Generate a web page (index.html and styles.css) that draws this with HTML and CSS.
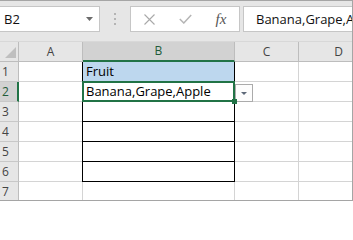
FILE: index.html
```html
<!DOCTYPE html>
<html>
<head>
<meta charset="utf-8">
<link rel="stylesheet" href="styles.css">
</head>
<body>
<div class="window">
  <div class="toolbar">
    <div class="namebox">
      <span class="nb-text">B2</span>
      <svg class="nb-arrow" width="7" height="4" viewBox="0 0 7 4"><polygon points="0,0 7,0 3.5,4" fill="#6b6b6b"/></svg>
    </div>
    <div class="dots"><i></i><i></i><i></i></div>
    <div class="fbtns">
      <div class="fbtn">
        <svg width="11" height="11" viewBox="0 0 11 11"><path d="M0.5 0.5 L10.5 10.5 M10.5 0.5 L0.5 10.5" stroke="#a9a9a9" stroke-width="1.1" fill="none"/></svg>
      </div>
      <div class="fbtn">
        <svg width="13" height="10" viewBox="0 0 13 10"><polyline points="0.8,5 4.8,9 12.2,1" stroke="#b5b5b5" stroke-width="1.5" fill="none"/></svg>
      </div>
      <div class="fbtn"><span class="fx">fx</span></div>
    </div>
    <div class="finput"><span class="ftext">Banana,Grape,Apple</span></div>
  </div>
  <div class="sheet">
    <div class="grid">
      <div class="cell ch corner"><svg width="18" height="19" viewBox="0 0 18 19"><polygon points="16,5 16,16 5,16" fill="#bfbfbf"/></svg></div>
      <div class="cell ch">A</div>
      <div class="cell ch sel">B</div>
      <div class="cell ch">C</div>
      <div class="cell ch">D</div>

      <div class="cell rh">1</div>
      <div class="cell"></div>
      <div class="cell tb hdr">Fruit</div>
      <div class="cell"></div>
      <div class="cell"></div>

      <div class="cell rh sel">2</div>
      <div class="cell"></div>
      <div class="cell tb">Banana,Grape,Apple</div>
      <div class="cell"></div>
      <div class="cell"></div>

      <div class="cell rh">3</div>
      <div class="cell"></div>
      <div class="cell tb"></div>
      <div class="cell"></div>
      <div class="cell"></div>

      <div class="cell rh">4</div>
      <div class="cell"></div>
      <div class="cell tb"></div>
      <div class="cell"></div>
      <div class="cell"></div>

      <div class="cell rh">5</div>
      <div class="cell"></div>
      <div class="cell tb"></div>
      <div class="cell"></div>
      <div class="cell"></div>

      <div class="cell rh">6</div>
      <div class="cell"></div>
      <div class="cell tb"></div>
      <div class="cell"></div>
      <div class="cell"></div>

      <div class="cell rh">7</div>
      <div class="cell"></div>
      <div class="cell"></div>
      <div class="cell"></div>
      <div class="cell"></div>
    </div>
    <div class="selection"></div>
    <div class="dd-btn"><svg width="6" height="3" viewBox="0 0 6 3"><polygon points="0,0 6,0 3,3" fill="#5d6878"/></svg></div>
    <div class="handle"></div>
  </div>
</div>
</body>
</html>
```
FILE: styles.css
```css
html, body {
  margin: 0;
  padding: 0;
  background: #ffffff;
}

.window {
  width: 352px;
  height: 199px;
  border-top: 1px solid #a5a5a5;
  border-right: 1px solid #a5a5a5;
  border-bottom: 1px solid #a5a5a5;
  overflow: hidden;
  background: #e6e6e6;
  font-family: "Open Sans", "Noto Sans", sans-serif;
  display: flex;
  flex-direction: column;
}

.toolbar {
  flex: 0 0 41px;
  height: 41px;
  box-sizing: border-box;
  padding-top: 5px;
  display: flex;
  align-items: flex-start;
  border-bottom: 1px solid #d8d8d8;
}

.namebox {
  flex: 0 0 100px;
  width: 100px;
  height: 26px;
  box-sizing: border-box;
  background: #ffffff;
  border: 1px solid #c6c6c6;
  border-left: none;
  display: flex;
  align-items: center;
  justify-content: space-between;
  padding: 0 6px 0 4px;
  font-size: 13px;
  color: #111;
}

.nb-text {
  line-height: 24px;
}

.dots {
  flex: 0 0 30px;
  height: 26px;
  display: flex;
  flex-direction: column;
  align-items: center;
  justify-content: center;
  gap: 3px;
}

.dots i {
  display: block;
  width: 2px;
  height: 2px;
  background: #b4b4b4;
}

.fbtns {
  flex: 0 0 110px;
  height: 26px;
  box-sizing: border-box;
  background: #ffffff;
  border: 1px solid #c6c6c6;
  display: flex;
}

.fbtn {
  width: 36px;
  display: flex;
  align-items: center;
  justify-content: center;
}

.fx {
  font-family: "Liberation Serif", serif;
  font-style: italic;
  font-size: 15px;
  color: #555;
  line-height: 24px;
}

.finput {
  flex: 1 1 auto;
  min-width: 0;
  margin-left: 3px;
  height: 26px;
  box-sizing: border-box;
  background: #ffffff;
  border: 1px solid #c6c6c6;
  border-right: none;
  padding-left: 12px;
  font-size: 13px;
  line-height: 24px;
  white-space: nowrap;
  overflow: hidden;
  color: #111;
}

.sheet {
  position: relative;
  flex: 1 1 auto;
  min-height: 0;
  overflow: hidden;
  background: #ffffff;
}

.grid {
  display: grid;
  grid-template-columns: 19px 64px 152px 64px 80px;
  grid-template-rows: repeat(8, 20px);
}

.cell {
  box-sizing: border-box;
  height: 20px;
  border-right: 1px solid #d4d4d4;
  border-bottom: 1px solid #d4d4d4;
  font-size: 13px;
  line-height: 19px;
  padding-left: 3px;
  white-space: nowrap;
  overflow: hidden;
  color: #000;
  background: #ffffff;
}

.ch {
  background: #e6e6e6;
  border-right-color: #bdbdbd;
  border-bottom-color: #bdbdbd;
  text-align: center;
  font-size: 12px;
  color: #444;
  padding: 0;
}

.ch.sel {
  background: #d2d2d2;
  border-bottom: 2px solid #217346;
  color: #1f5c3a;
  line-height: 18px;
}

.corner svg {
  display: block;
}

.rh {
  background: #e6e6e6;
  border-right-color: #bdbdbd;
  border-bottom-color: #c8c8c8;
  font-size: 12px;
  color: #444;
  padding-left: 2px;
}

.rh.sel {
  background: #d2d2d2;
  border-right: 2px solid #217346;
  color: #1f5c3a;
}

.tb {
  border-right-color: #000;
  border-bottom-color: #000;
  box-shadow: -1px 0 0 #000;
}

.hdr {
  background: #bdd7ee;
}

.selection {
  position: absolute;
  left: 82px;
  top: 39px;
  width: 153px;
  height: 21px;
  box-sizing: border-box;
  border: 2px solid #217346;
}

.dd-btn {
  position: absolute;
  left: 235px;
  top: 42px;
  width: 18px;
  height: 18px;
  box-sizing: border-box;
  border: 1px solid #ababab;
  background: #fdfdfd;
  display: flex;
  align-items: center;
  justify-content: center;
}

.dd-btn svg {
  display: block;
}

.handle {
  position: absolute;
  left: 232px;
  top: 57px;
  width: 5px;
  height: 5px;
  background: #217346;
}
```
